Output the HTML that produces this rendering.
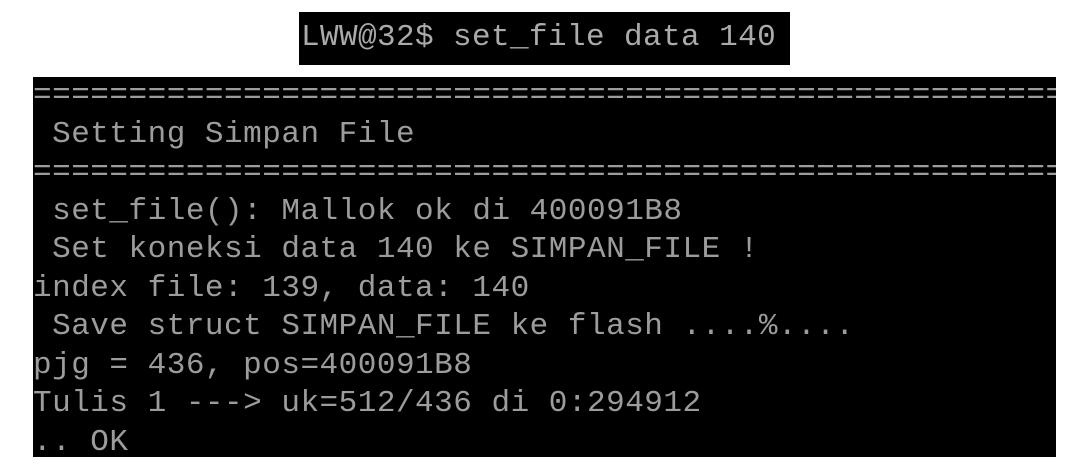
<!DOCTYPE html>
<html><head><meta charset="utf-8"><style>
html,body{margin:0;padding:0;background:#fff;width:1068px;height:476px;overflow:hidden}
.top{position:absolute;left:299px;top:12px;width:491px;height:53px;background:#000;}
.top span{position:absolute;left:2px;top:8px;font:31px/36px "Liberation Mono",monospace;color:#aaaaaa;white-space:pre;letter-spacing:0.4px}
.main{position:absolute;left:33px;top:77px;width:1023px;height:380px;background:#000;overflow:hidden}
.main pre{margin:0;position:absolute;left:0;top:0;font:31px/38.5px "Liberation Mono",monospace;color:#9c9c9c;white-space:pre;letter-spacing:0.5px}
</style></head><body>
<div class="top"><span>LWW@32$ set_file data 140</span></div>
<div class="main"><pre>======================================================
 Setting Simpan File
======================================================
 set_file(): Mallok ok di 400091B8
 Set koneksi data 140 ke SIMPAN_FILE !
index file: 139, data: 140
 Save struct SIMPAN_FILE ke flash ....%....
pjg = 436, pos=400091B8
Tulis 1 ---> uk=512/436 di 0:294912
.. OK</pre></div>
</body></html>
